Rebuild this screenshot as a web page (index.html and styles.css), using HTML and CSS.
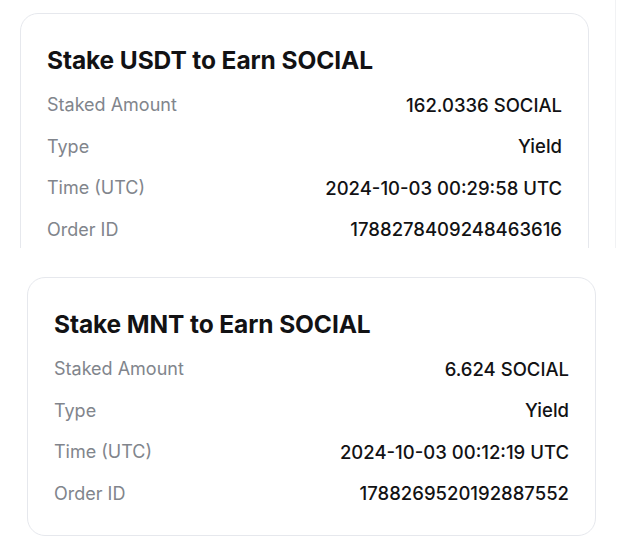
FILE: index.html
```html
<!DOCTYPE html>
<html>
<head>
<meta charset="utf-8">
<link rel="stylesheet" href="styles.css">
</head>
<body>
<div class="top">
  <div class="clip">
    <div class="card">
      <div class="title">Stake USDT to Earn SOCIAL</div>
      <div class="row"><span class="label">Staked Amount</span><span class="value">162.0336 SOCIAL</span></div>
      <div class="row"><span class="label">Type</span><span class="value">Yield</span></div>
      <div class="row"><span class="label">Time (UTC)</span><span class="value">2024-10-03 00:29:58 UTC</span></div>
      <div class="row"><span class="label">Order ID</span><span class="value">1788278409248463616</span></div>
    </div>
  </div>
  <div class="edge"></div>
</div>
<div class="card card2">
  <div class="title">Stake MNT to Earn SOCIAL</div>
  <div class="row"><span class="label">Staked Amount</span><span class="value">6.624 SOCIAL</span></div>
  <div class="row"><span class="label">Type</span><span class="value">Yield</span></div>
  <div class="row"><span class="label">Time (UTC)</span><span class="value">2024-10-03 00:12:19 UTC</span></div>
  <div class="row"><span class="label">Order ID</span><span class="value">1788269520192887552</span></div>
</div>
</body>
</html>
```
FILE: styles.css
```css
html, body {
  margin: 0;
  padding: 0;
  background: #ffffff;
  font-family: Inter, "Noto Sans", sans-serif;
  color: #121214;
}
.top {
  display: flex;
  height: 248px;
}
.clip {
  margin-left: 20px;
  margin-top: 13px;
  width: 569px;
  height: 235px;
  overflow: hidden;
  flex: none;
}
.edge {
  margin-left: 26px;
  width: 0;
  border-left: 1px solid #f1f2f4;
  height: 248px;
}
.card {
  box-sizing: border-box;
  width: 569px;
  border: 1px solid #e6e8ed;
  border-radius: 18px;
  padding: 31px 26px 20px 26px;
  background: #fff;
}
.card2 {
  margin-top: 29px;
  margin-left: 27px;
  height: 259px;
}
.title {
  font-size: 24.5px;
  font-weight: 700;
  line-height: 30px;
  margin-bottom: 9px;
  letter-spacing: -0.1px;
}
.row {
  display: flex;
  justify-content: space-between;
  align-items: center;
  height: 41.5px;
  font-size: 18px;
}
.label {
  color: #81858c;
}
.value {
  font-weight: 500;
  font-size: 18.5px;
  color: #121214;
}
```
